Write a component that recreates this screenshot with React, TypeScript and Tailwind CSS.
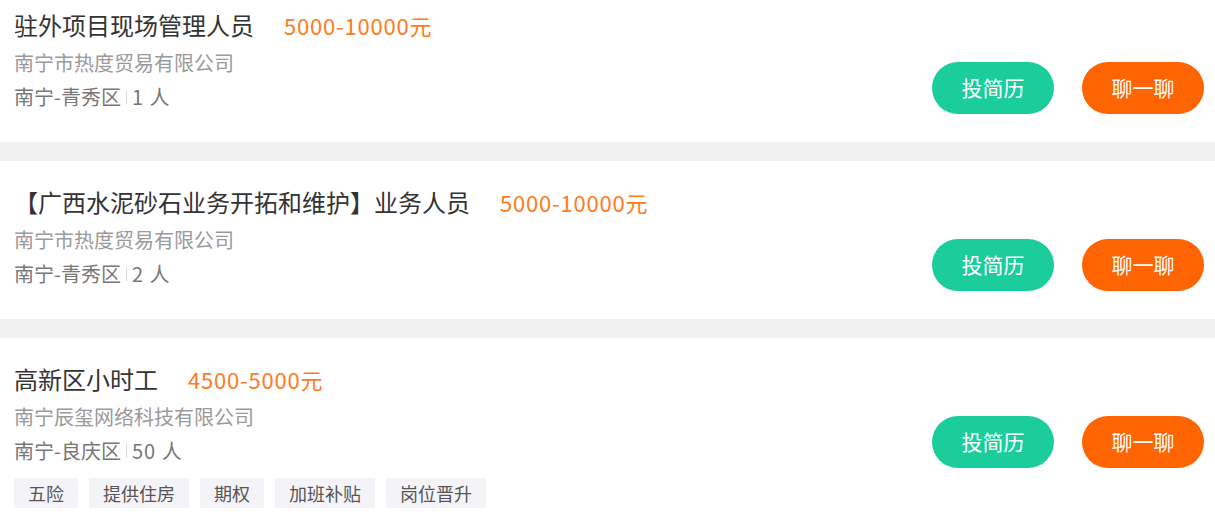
import React from "react";

type Job = {
  title: string;
  salary: string;
  company: string;
  area: string;
  count: string;
  tags?: string[];
};

const jobs: Job[] = [
  {
    title: "驻外项目现场管理人员",
    salary: "5000-10000元",
    company: "南宁市热度贸易有限公司",
    area: "南宁-青秀区",
    count: "1 人",
  },
  {
    title: "【广西水泥砂石业务开拓和维护】业务人员",
    salary: "5000-10000元",
    company: "南宁市热度贸易有限公司",
    area: "南宁-青秀区",
    count: "2 人",
  },
  {
    title: "高新区小时工",
    salary: "4500-5000元",
    company: "南宁辰玺网络科技有限公司",
    area: "南宁-良庆区",
    count: "50 人",
    tags: ["五险", "提供住房", "期权", "加班补贴", "岗位晋升"],
  },
];

function JobCard({ job }: { job: Job }) {
  return (
    <div className="flex items-start bg-white pl-[14px] pr-[11px] pt-[27px] pb-[28px]">
      <div className="flex-1 min-w-0">
        {/* Title + salary */}
        <div className="flex items-center h-[28px] whitespace-nowrap">
          <span className="text-[24px] leading-[28px] text-[#333]">{job.title}</span>
          <span className="ml-[30px] text-[22px] leading-[28px] tracking-[0.8px] text-[#ff7b1c]">{job.salary}</span>
        </div>
        <p className="mt-[11px] text-[20px] leading-[26px] text-[#9a9a9a]">{job.company}</p>
        <div className="mt-[8px] flex items-center h-[26px] text-[20px] leading-[26px] text-[#777]">
          <span>{job.area}</span>
          <span className="mx-[5px] w-px h-[14px] bg-[#ddd]"></span>
          <span className="tracking-[1px]">{job.count}</span>
        </div>
        {job.tags && (
          <div className="mt-[14px] flex gap-[11px]">
            {job.tags.map((t, i) => (
              <span
                key={i}
                className="h-[30px] px-[14px] flex items-center bg-[#f4f4f8] text-[18px] text-[#555]"
              >
                {t}
              </span>
            ))}
          </div>
        )}
      </div>

      {/* Actions */}
      <div className="mt-[51px] flex gap-[28px] shrink-0">
        <button className="w-[122px] h-[52px] rounded-full bg-[#1ccd9c] text-white text-[21px]">
          投简历
        </button>
        <button className="w-[122px] h-[52px] rounded-full bg-[#ff6403] text-white text-[21px]">
          聊一聊
        </button>
      </div>
    </div>
  );
}

export default function App() {
  return (
    <div className="w-[1215px] h-[527px] overflow-hidden bg-[#f1f1f1] font-['Noto_Sans_CJK_SC','Microsoft_YaHei',sans-serif]">
      <div className="-mt-[16px] flex flex-col gap-[19px]">
        {jobs.map((job, i) => (
          <JobCard key={i} job={job} />
        ))}
      </div>
    </div>
  );
}
